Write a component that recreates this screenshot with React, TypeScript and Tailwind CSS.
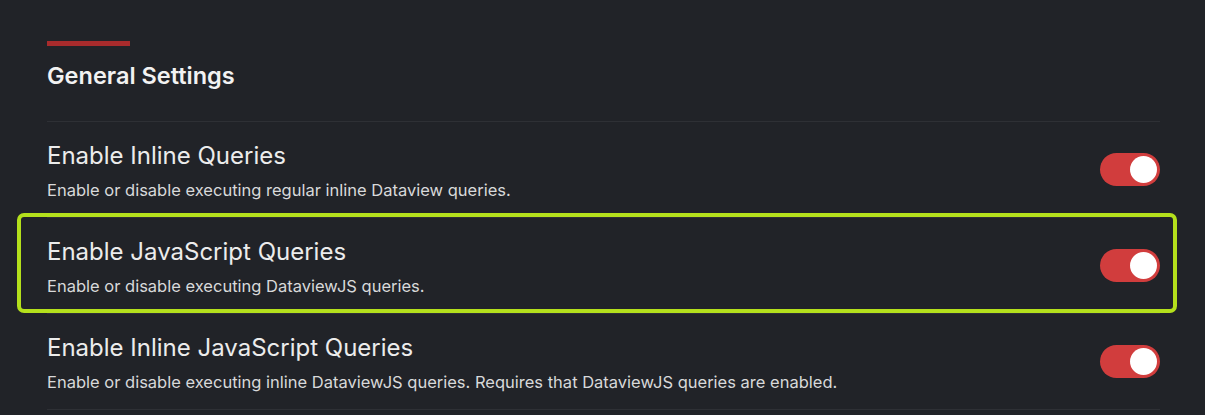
import React from 'react'

const settings = [
  {
    title: 'Enable Inline Queries',
    desc: 'Enable or disable executing regular inline Dataview queries.',
  },
  {
    title: 'Enable JavaScript Queries',
    desc: 'Enable or disable executing DataviewJS queries.',
    highlight: true,
  },
  {
    title: 'Enable Inline JavaScript Queries',
    desc: 'Enable or disable executing inline DataviewJS queries. Requires that DataviewJS queries are enabled.',
  },
]

function Toggle() {
  return (
    <div className="relative h-[33px] w-[60px] shrink-0 rounded-full bg-[#d13d3d]">
      <div className="absolute right-[3px] top-[3px] h-[27px] w-[27px] rounded-full bg-white" />
    </div>
  )
}

export default function App() {
  return (
    <div
      className="min-h-[415px] w-full bg-[#212328] pl-[47px] pr-[45px] pt-[41px]"
      style={{ fontFamily: 'Inter, "Noto Sans", sans-serif' }}
    >
      {/* header */}
      <div className="h-[5px] w-[83px] bg-[#a82b2c]" />
      <h2 className="mt-4 mb-[31px] text-[23.5px] font-semibold leading-[28px] text-[#f2f2f2]">
        General Settings
      </h2>

      {settings.map((s) => (
        <div
          key={s.title}
          className="relative flex items-center justify-between border-t border-[#2e3035] py-4"
        >
          <div className="flex flex-col gap-[5px]">
            <div className="text-[24px] leading-[36px] text-[#ececec]">{s.title}</div>
            <div className="text-[16.5px] leading-[22px] text-[#d8d9da]">{s.desc}</div>
          </div>
          <Toggle />
          {s.highlight && (
            <div className="pointer-events-none absolute -left-[30px] -right-[17px] -top-[5px] bottom-0 rounded-[7px] border-[4px] border-[#b4e01c]" />
          )}
        </div>
      ))}
      <div className="border-t border-[#2e3035]" />
    </div>
  )
}
